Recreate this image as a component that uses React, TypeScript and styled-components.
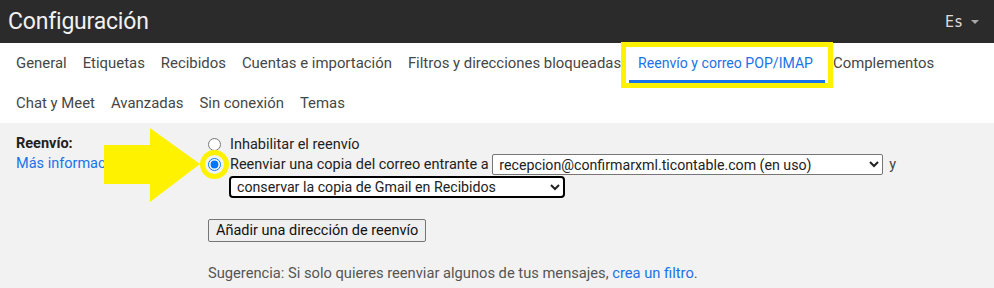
import styled, { createGlobalStyle } from "styled-components";

const GlobalStyle = createGlobalStyle`
  body {
    margin: 0;
    background: #f2f2f2;
    font-family: Roboto, "Liberation Sans", sans-serif;
  }
`;

const Page = styled.div`
  width: 994px;
  height: 288px;
  overflow: hidden;
  background: #f2f2f2;
`;

const TopBar = styled.header`
  height: 43px;
  background: #2b2b2b;
  display: flex;
  align-items: center;
  justify-content: space-between;
  padding: 0 15px 0 8px;
  box-sizing: border-box;
`;

const Title = styled.h1`
  margin: 0;
  font-size: 23px;
  font-weight: 400;
  color: #f1f1f1;
  letter-spacing: -0.2px;
`;

const Lang = styled.div`
  display: flex;
  align-items: center;
  gap: 8px;
  color: #dcdcdc;
  font-family: "DejaVu Sans Mono", monospace;
  font-size: 15px;
`;

const Caret = styled.span`
  width: 0;
  height: 0;
  border-left: 4px solid transparent;
  border-right: 4px solid transparent;
  border-top: 4px solid #a8a8a8;
`;

const Tabs = styled.nav`
  background: #fff;
  padding: 0 8px;
  display: flex;
  flex-wrap: wrap;
  width: 994px;
  box-sizing: border-box;
`;

const Tab = styled.div<{ $active?: boolean; $marked?: boolean }>`
  position: relative;
  height: 40px;
  padding: 3px 8px 0;
  display: flex;
  align-items: center;
  box-sizing: border-box;
  font-size: ${(p) => (p.$active ? "14.1px" : "14.9px")};
  color: ${(p) => (p.$active ? "#1a73e8" : "#444746")};
  border-bottom: 3px solid ${(p) => (p.$active ? "#1a73e8" : "transparent")};
  ${(p) => p.$active && "padding: 3px 12px 0 9px;"}

  ${(p) =>
    p.$marked &&
    `&::after {
      content: "";
      position: absolute;
      top: -1px;
      left: -8px;
      right: -8px;
      bottom: -8px;
      border: 5px solid #fff200;
    }`}
`;

const Content = styled.section`
  position: relative;
  display: grid;
  grid-template-columns: 192px 1fr;
  padding: 11px 0 0 16px;
  font-size: 14.5px;
  color: #222;
`;

const Side = styled.div`
  display: flex;
  flex-direction: column;
`;

const SideLabel = styled.div`
  font-weight: 700;
  line-height: 20px;
  color: #222;
`;

const Link = styled.a`
  color: #1a73e8;
  text-decoration: none;
  line-height: 20px;
`;

const Options = styled.div`
  display: flex;
  flex-direction: column;
  align-items: flex-start;
`;

const Row = styled.label`
  display: flex;
  align-items: center;
  min-height: 20px;
`;

const RadioWrap = styled.span<{ $ringed?: boolean }>`
  position: relative;
  display: flex;
  margin-right: 9px;

  ${(p) =>
    p.$ringed &&
    `&::before {
      content: "";
      position: absolute;
      left: -8px;
      top: -8px;
      width: 19px;
      height: 19px;
      border: 5px solid #fff200;
      border-radius: 50%;
    }`}
`;

const Radio = styled.input`
  margin: 0;
  width: 13px;
  height: 13px;
  position: relative;
`;

const Select = styled.select<{ $w: number; $focused?: boolean }>`
  width: ${(p) => p.$w}px;
  height: ${(p) => (p.$focused ? 22 : 21)}px;
  font-family: Roboto, "Liberation Sans", sans-serif;
  font-size: 14.2px;
  color: #222;
  background: #fff;
  border: ${(p) => (p.$focused ? "2px solid #000" : "1px solid #767676")};
  border-radius: ${(p) => (p.$focused ? "4px" : "2px")};
  padding: 0 2px;
  outline: none;
`;

const And = styled.span`
  margin-left: 6px;
  color: #444;
`;

const KeepRow = styled.div`
  margin: 1px 0 0 21px;
`;

const Button = styled.button`
  margin-top: 21px;
  height: 23px;
  padding: 0 7px;
  font-family: Roboto, "Liberation Sans", sans-serif;
  font-size: 14.5px;
  color: #111;
  background: #efefef;
  border: 1px solid #767676;
  border-radius: 2px;
`;

const Hint = styled.p`
  margin: 21px 0 0;
  color: #555;
  font-size: 14.7px;
  line-height: 20px;
`;

const Arrow = styled.svg`
  position: absolute;
  left: 104px;
  top: 5px;
`;

const tabsRow = [
  "General",
  "Etiquetas",
  "Recibidos",
  "Cuentas e importación",
  "Filtros y direcciones bloqueadas",
];

export default function App() {
  return (
    <Page>
      <GlobalStyle />
      <TopBar>
        <Title>Configuración</Title>
        <Lang>
          Es
          <Caret />
        </Lang>
      </TopBar>
      <Tabs>
        {tabsRow.map((t) => (
          <Tab key={t}>{t}</Tab>
        ))}
        <Tab $active $marked>
          Reenvío y correo POP/IMAP
        </Tab>
        <Tab>Complementos</Tab>
        <Tab>Chat y Meet</Tab>
        <Tab>Avanzadas</Tab>
        <Tab>Sin conexión</Tab>
        <Tab>Temas</Tab>
      </Tabs>
      <Content>
        <Side>
          <SideLabel>Reenvío:</SideLabel>
          <Link href="#">Más información</Link>
        </Side>
        <Options>
          <Row>
            <RadioWrap>
              <Radio type="radio" name="fwd" />
            </RadioWrap>
            Inhabilitar el reenvío
          </Row>
          <Row>
            <RadioWrap $ringed>
              <Radio type="radio" name="fwd" defaultChecked />
            </RadioWrap>
            Reenviar una copia del correo entrante a&nbsp;
            <Select $w={391} defaultValue="a">
              <option value="a">recepcion@confirmarxml.ticontable.com (en uso)</option>
            </Select>
            <And>y</And>
          </Row>
          <KeepRow>
            <Select $w={336} $focused defaultValue="k">
              <option value="k">conservar la copia de Gmail en Recibidos</option>
            </Select>
          </KeepRow>
          <Button>Añadir una dirección de reenvío</Button>
          <Hint>
            Sugerencia: Si solo quieres reenviar algunos de tus mensajes,{" "}
            <Link href="#">crea un filtro</Link>.
          </Hint>
        </Options>
        <Arrow width="96" height="76" viewBox="0 0 96 76">
          <polygon points="0,17 46,17 46,0 96,36 46,74 46,56 0,56" fill="#fff200" />
        </Arrow>
      </Content>
    </Page>
  );
}
